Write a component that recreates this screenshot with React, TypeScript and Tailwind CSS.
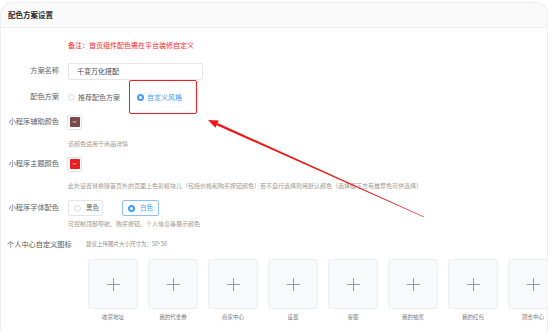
const tiles = ["收货地址", "我的代金券", "商家中心", "设置", "客服", "我的抽奖", "我的红包", "团长中心"];

const Radio = ({ checked }: { checked?: boolean }) =>
  checked ? (
    <span className="w-[7px] h-[7px] rounded-full bg-[#409eff] flex items-center justify-center shrink-0">
      <span className="w-[3px] h-[3px] rounded-full bg-white" />
    </span>
  ) : (
    <span className="w-[7px] h-[7px] rounded-full border border-[#d6d9de] bg-white shrink-0" />
  );

const Swatch = ({ color }: { color: string }) => (
  <div className="w-[15px] h-[15px] border border-[#e2e4e8] rounded-[2px] bg-white flex items-center justify-center">
    <div className={`w-[10px] h-[10px] rounded-[1px] flex items-center justify-center ${color}`}>
      <svg width="5" height="4" viewBox="0 0 5 4">
        <path d="M0.8 1 L2.5 2.8 L4.2 1" fill="none" stroke="white" strokeWidth="0.8" />
      </svg>
    </div>
  </div>
);

const Label = ({ children }: { children: string }) => (
  <div className="w-[52px] text-right text-[7.2px] text-[#606266] leading-none shrink-0">{children}</div>
);

const Hint = ({ children, h }: { children: string; h: string }) => (
  <div className={`pl-[61px] flex items-center text-[6px] text-[#9a9a9a] leading-none whitespace-nowrap ${h}`}>
    {children}
  </div>
);

const App = () => {
  return (
    <div
      className="relative w-[548px] h-[332px] bg-white overflow-hidden"
      style={{ fontFamily: '"Noto Sans CJK SC", "Noto Sans", sans-serif' }}
    >
      <div className="absolute inset-x-0 top-[2px] h-[340px] rounded-[14px] border border-[#efefef] shadow-[0_0_3px_rgba(0,0,0,0.06)] bg-white">
        <div className="h-[25px] bg-[#fafafa] border-b border-[#f0f0f0] rounded-t-[14px] flex items-center pl-[7px]">
          <span className="text-[7.5px] text-[#2a2a2a] font-semibold">配色方案设置</span>
        </div>

        <div className="pl-[6px] flex flex-col">
          <div className="h-[34px] pl-[61px] flex items-center text-[7px] text-[#ff2a2a] leading-none">
            备注：首页组件配色需在平台装修自定义
          </div>

          <div className="h-[18px] flex items-center gap-[9px]">
            <Label>方案名称</Label>
            <div className="w-[135px] h-[17px] border border-[#e3e5e9] rounded-[2px] flex items-center pl-[8px] text-[7px] text-[#444]">
              千变万化搭配
            </div>
          </div>

          <div className="h-[34px] flex items-center gap-[9px]">
            <Label>配色方案</Label>
            <div className="flex items-center gap-[3px]">
              <Radio />
              <span className="text-[7px] text-[#606266]">推荐配色方案</span>
            </div>
            <div className="flex items-center gap-[3px] ml-[8px]">
              <Radio checked />
              <span className="text-[7px] text-[#409eff]">自定义风格</span>
            </div>
          </div>

          <div className="h-[16px] flex items-center gap-[8px]">
            <Label>小程序辅助颜色</Label>
            <Swatch color="bg-[#7b4848]" />
          </div>
          <Hint h="h-[28px]">该颜色适用于商品详情</Hint>

          <div className="h-[12px] flex items-center gap-[8px]">
            <Label>小程序主题颜色</Label>
            <Swatch color="bg-[#ee1c1c]" />
          </div>
          <Hint h="h-[32px]">
            此处设置替换除首页外的页面上色彩模块儿（包括价格和购买按钮颜色）若不自行选择则用默认颜色（选择框下方有推荐色可供选择）
          </Hint>

          <div className="h-[12px] flex items-center gap-[9px]">
            <Label>小程序字体配色</Label>
            <div className="w-[35px] h-[16px] border border-[#e3e5e9] rounded-[2px] flex items-center pl-[5px] gap-[5px]">
              <Radio />
              <span className="text-[6.5px] text-[#606266]">黑色</span>
            </div>
            <div className="w-[37px] h-[16px] border border-[#8cc0ff] rounded-[2px] flex items-center pl-[5px] gap-[5px] ml-[10px]">
              <Radio checked />
              <span className="text-[6.5px] text-[#409eff]">白色</span>
            </div>
          </div>
          <Hint h="h-[20px]">可控制顶部导航、购买按钮、个人信息等展示颜色</Hint>

          <div className="h-[22px] flex items-center">
            <span className="text-[7.2px] text-[#555] leading-none w-[79px]">个人中心自定义图标</span>
            <span className="text-[5.5px] text-[#8a8a8a] leading-none">建议上传图片大小尺寸为：50*50</span>
          </div>

          <div className="flex gap-[10px] pl-[81px] mt-[3px]">
            {tiles.map((t) => (
              <div key={t} className="flex flex-col items-center shrink-0">
                <div className="w-[50px] h-[50px] rounded-[3px] border border-[#eceef2] bg-[#f8f9fb] flex items-center justify-center">
                  <svg width="13" height="13" viewBox="0 0 13 13">
                    <path d="M6.5 0 V13 M0 6.5 H13" stroke="#8c8f96" strokeWidth="0.9" />
                  </svg>
                </div>
                <span className="h-[18px] flex items-center text-[5.5px] text-[#777] leading-none">{t}</span>
              </div>
            ))}
          </div>
        </div>
      </div>

      <div className="absolute left-[129px] top-[80px] w-[68px] h-[34px] border-[1.5px] border-[#f21d1d] rounded-[2px]" />

      <svg className="absolute inset-0 pointer-events-none" width="548" height="332" viewBox="0 0 548 332">
        <polygon points="208,120 218.7,120.5 215.5,127.7" fill="#f01515" />
        <polygon points="217.6,123 216.6,125.2 423.9,217.3 424.1,216.7" fill="#f01515" />
      </svg>
    </div>
  );
};

export default App;
